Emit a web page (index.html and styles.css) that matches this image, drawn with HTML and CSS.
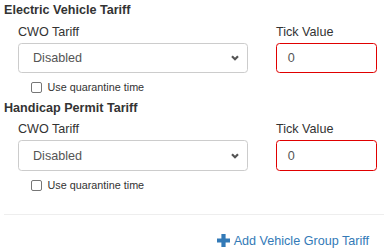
FILE: index.html
```html
<!DOCTYPE html>
<html>
<head>
<meta charset="utf-8">
<link rel="stylesheet" href="styles.css">
</head>
<body>
<div class="page">
  <section class="tariff">
    <h4 class="tariff-title">Electric Vehicle Tariff</h4>
    <div class="tariff-grid">
      <div class="field">
        <label class="field-label">CWO Tariff</label>
        <div class="select">
          <span class="select-value">Disabled</span>
          <svg class="chevron" width="8" height="6" viewBox="0 0 8 6"><path d="M1 1.2 L4 4.2 L7 1.2" fill="none" stroke="#555" stroke-width="2.2"/></svg>
        </div>
        <label class="check">
          <span class="check-box"></span>
          <span class="check-text">Use quarantine time</span>
        </label>
      </div>
      <div class="field">
        <label class="field-label">Tick Value</label>
        <div class="input invalid">0</div>
      </div>
    </div>
  </section>
  <section class="tariff">
    <h4 class="tariff-title">Handicap Permit Tariff</h4>
    <div class="tariff-grid">
      <div class="field">
        <label class="field-label">CWO Tariff</label>
        <div class="select">
          <span class="select-value">Disabled</span>
          <svg class="chevron" width="8" height="6" viewBox="0 0 8 6"><path d="M1 1.2 L4 4.2 L7 1.2" fill="none" stroke="#555" stroke-width="2.2"/></svg>
        </div>
        <label class="check">
          <span class="check-box"></span>
          <span class="check-text">Use quarantine time</span>
        </label>
      </div>
      <div class="field">
        <label class="field-label">Tick Value</label>
        <div class="input invalid">0</div>
      </div>
    </div>
  </section>
  <hr class="divider">
  <div class="footer">
    <a class="add-link" href="#">
      <svg class="plus" width="13" height="13" viewBox="0 0 13 13"><path d="M4.4 0 H8.6 V4.4 H13 V8.6 H8.6 V13 H4.4 V8.6 H0 V4.4 H4.4 Z" fill="#337ab7"/></svg>
      <span>Add Vehicle Group Tariff</span>
    </a>
  </div>
</div>
</body>
</html>
```
FILE: styles.css
```css
html, body {
  margin: 0;
  padding: 0;
  background: #fff;
}
body {
  font-family: "Liberation Sans", Arial, sans-serif;
  font-size: 12.6px;
  line-height: 18px;
  color: #333;
  width: 384px;
  height: 252px;
  overflow: hidden;
}
.page {
  padding-top: 1px;
}
.tariff {
  margin-bottom: 3.2px;
}
.tariff-title {
  margin: 0;
  padding-left: 4px;
  font-size: 12.6px;
  font-weight: bold;
  line-height: 18px;
}
.tariff-grid {
  display: grid;
  grid-template-columns: 230px 101px;
  column-gap: 28px;
  padding-left: 18px;
  margin-top: 3.6px;
}
.field {
  display: flex;
  flex-direction: column;
}
.field-label {
  display: block;
  line-height: 18px;
  margin-bottom: 2px;
}
.select {
  box-sizing: border-box;
  height: 30.6px;
  border: 1px solid #ccc;
  border-radius: 3.6px;
  display: flex;
  align-items: center;
  justify-content: space-between;
  padding: 0 8px 0 14px;
  color: #555;
}
.select-value {
  color: #555;
}
.chevron {
  display: block;
  margin-top: 1px;
}
.input {
  box-sizing: border-box;
  height: 30.6px;
  border: 1px solid #ccc;
  border-radius: 3.6px;
  padding: 0 10.8px;
  display: flex;
  align-items: center;
  color: #555;
}
.input.invalid {
  border-color: #e00000;
}
.check {
  display: flex;
  align-items: center;
  margin-top: 6.3px;
  padding-left: 13px;
  font-size: 10.8px;
  line-height: 16px;
  height: 16px;
}
.check-box {
  box-sizing: border-box;
  width: 11px;
  height: 11px;
  border: 1px solid #767676;
  border-radius: 2px;
  background: #fff;
  margin-right: 5.5px;
  margin-top: 0px;
}
.check-text {
  color: #333;
}
.divider {
  margin: 20.8px 0 16.6px 4px;
  border: 0;
  border-top: 1px solid #eee;
  height: 0;
}
.footer {
  display: flex;
  justify-content: flex-end;
  padding-right: 15px;
}
.add-link {
  display: flex;
  align-items: center;
  gap: 4px;
  color: #337ab7;
  text-decoration: none;
  line-height: 18px;
}
.plus {
  display: block;
  margin-top: 0px;
}
```
